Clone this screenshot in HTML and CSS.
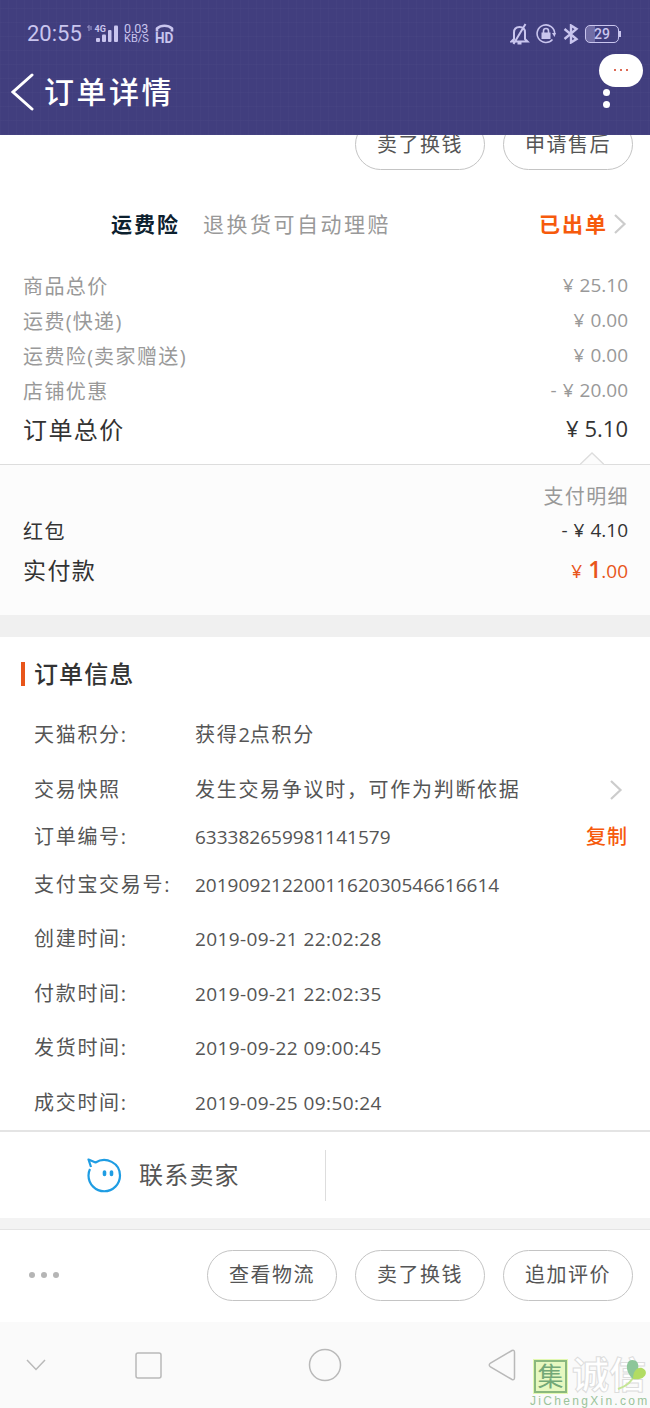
FILE: index.html
```html
<!DOCTYPE html>
<html lang="zh-CN">
<head>
    <meta charset="UTF-8">
    <meta name="viewport" content="width=device-width, initial-scale=1.0">
    <title>订单详情</title>
    <link rel="stylesheet" href="styles.css">
</head>
<body>
    <header class="header">
        <div class="status-bar">
            <span class="clock">20:55</span>
            <svg class="signal" width="33" height="20" viewBox="0 0 33 20" fill="#c9c5ee">
                <path d="M3 1v6M1 3h2M5 2v4" stroke="#c9c5ee" stroke-width="1" opacity=".7"/>
                <text x="8.500" y="7.500" font-size="9" font-weight="700">4G</text>
                <rect x="10" y="14" width="4" height="4" rx="1"/>
                <rect x="16" y="10.500" width="4" height="7.500" rx="1"/>
                <rect x="22" y="6" width="3.500" height="12" rx="1"/>
                <rect x="28" y="1.500" width="4" height="16.500" rx="1"/>
            </svg>
            <span class="speed"><span>0.03</span><span class="unit">KB/S</span></span>
            <span class="hd">
                <svg width="19" height="8" viewBox="0 0 19 8" fill="none" stroke="#c9c5ee" stroke-width="2.600"><path d="M2 7.500V4.500C6 .8 13 .8 17 4.500v3"/></svg>
                <b>HD</b>
            </span>
            <div class="status-icons">
                <svg width="20" height="22" viewBox="0 0 20 22" fill="none" stroke="#c9c5ee" stroke-width="2">
                    <path d="M4 16V9.500C4 6 6 4 9.500 4S15 6 15 9.500V16l2.500 2.500h-16zM7.500 20.500h4M3.500 21 15.500 1"/>
                </svg>
                <svg width="20" height="20" viewBox="0 0 20 20" fill="none" stroke="#c9c5ee" stroke-width="1.600">
                    <path d="M16.500 15.500A8.800 8.800 0 1 1 18.700 9.500"/>
                    <path d="M7.500 9V7a2.500 2.500 0 0 1 5 0v2"/>
                    <path d="M5.500 8.500h9V15h-9zM16 9h4l-1.500 4z" fill="#c9c5ee" stroke="none"/>
                </svg>
                <svg width="16" height="20" viewBox="0 0 16 20" fill="none" stroke="#c9c5ee" stroke-width="2.400">
                    <path d="m1.500 5 12 10L8 18.500v-17L13.500 5l-12 10"/>
                </svg>
                <span class="battery">29</span>
            </div>
        </div>
        <div class="title-bar">
            <svg width="24" height="40" viewBox="0 0 24 40" fill="none" stroke="#fff" stroke-width="3" stroke-linecap="round"><path d="M21 3 2 20l19 17"/></svg>
            <h1>订单详情</h1>
            <div class="more"><i></i><i></i></div>
        </div>
        <div class="bubble"><i></i><i></i><i></i></div>
    </header>

    <div class="goods-actions">
        <button class="button">卖了换钱</button>
        <button class="button">申请售后</button>
    </div>

    <div class="insurance">
        <b>运费险</b>
        <span class="desc">退换货可自动理赔</span>
        <b class="state">已出单</b>
        <svg class="arrow" width="14" height="22" viewBox="0 0 14 22"><path d="m2 2 9.500 9L2 20"/></svg>
    </div>

    <div class="prices">
        <div class="row"><span>商品总价</span><span class="num"><em>¥</em>25.10</span></div>
        <div class="row"><span>运费<s>(</s>快递<s>)</s></span><span class="num"><em>¥</em>0.00</span></div>
        <div class="row"><span>运费险<s>(</s>卖家赠送<s>)</s></span><span class="num"><em>¥</em>0.00</span></div>
        <div class="row"><span>店铺优惠</span><span class="num"><em>-</em><em>¥</em>20.00</span></div>
        <div class="row total"><span>订单总价</span><span class="num"><em>¥</em>5.10</span></div>
    </div>

    <div class="payment">
        <svg class="notch" width="24" height="13" viewBox="0 0 24 13"><path d="M0 12.500 12 1l12 11.500" fill="#fcfcfc" stroke="#ddd" stroke-width="1.300"/></svg>
        <div class="row detail"><span>支付明细</span></div>
        <div class="row"><span>红包</span><span class="num"><em>-</em><em>¥</em>4.10</span></div>
        <div class="row paid"><span>实付款</span><span class="num"><em>¥</em><strong>1</strong>.00</span></div>
    </div>

    <section class="info">
        <h2>订单信息</h2>
        <div class="item"><label>天猫积分<s>:</s></label><span>获得<u>2</u>点积分</span></div>
        <div class="item">
            <label>交易快照</label><span>发生交易争议时，可作为判断依据</span>
            <svg class="arrow" width="14" height="22" viewBox="0 0 14 22"><path d="m2 2 9.500 9L2 20"/></svg>
        </div>
        <div class="item tight"><label>订单编号<s>:</s></label><span class="code">633382659981141579</span><a class="copy">复制</a></div>
        <div class="item tight"><label>支付宝交易号<s>:</s></label><span class="code">2019092122001162030546616614</span></div>
        <div class="item"><label>创建时间<s>:</s></label><span class="time">2019-09-21 22:02:28</span></div>
        <div class="item"><label>付款时间<s>:</s></label><span class="time">2019-09-21 22:02:35</span></div>
        <div class="item"><label>发货时间<s>:</s></label><span class="time">2019-09-22 09:00:45</span></div>
        <div class="item"><label>成交时间<s>:</s></label><span class="time">2019-09-25 09:50:24</span></div>
    </section>

    <div class="contact">
        <div class="seller">
            <svg width="36" height="36" viewBox="0 0 36 36" fill="none" stroke="#1f9de3" stroke-width="2.200" stroke-linejoin="round">
                <path d="M5 10 2.500 2.500 9.500 5.500C20-1 34 6 34 18.500A15.700 15.700 0 0 1 2.500 18.500c0-3 .5-4.500 1.500-6.500"/>
                <path d="M18.500 15v2.500M25.500 15v2.500" stroke-width="3.600" stroke-linecap="round"/>
            </svg>
            <span>联系卖家</span>
        </div>
    </div>

    <div class="footer">
        <div class="dots"><i></i><i></i><i></i></div>
        <button class="button">查看物流</button>
        <button class="button">卖了换钱</button>
        <button class="button">追加评价</button>
    </div>

    <!-- Android 导航栏 -->
    <nav class="nav">
        <svg width="20" height="12" viewBox="0 0 20 12"><path d="m1 1 9 9.500L19 1"/></svg>
        <svg width="27" height="27" viewBox="0 0 27 27"><rect x="1" y="1" width="25" height="25" rx="2"/></svg>
        <svg width="34" height="34" viewBox="0 0 34 34"><circle cx="17" cy="17" r="15.500"/></svg>
        <svg width="28" height="32" viewBox="0 0 28 32"><path d="M24 1.500 2.500 14q-2.500 2 0 4L24 30.500q2.500 1 2.500-2v-25q0-3-2.500-2z"/></svg>
        <div class="watermark">
            <div class="brand">
                <span class="seal">集</span>
                <span class="outline">诚信</span>
                <svg class="leaf" width="34" height="34" viewBox="0 0 34 34">
                    <path d="M3 31C12 28 17 24 19 17" fill="none" stroke="#c5e695" stroke-width="2"/>
                    <path d="M18 21C9 13 11 2 17 2c6 0 7 5 6 9z" fill="#8dc69a"/>
                    <path d="M18 21c0-8 4-12 9-11 8 3 3 13-9 11z" fill="#b2dc62"/>
                </svg>
            </div>
            <div class="domain">JiChengXin.com</div>
        </div>
    </nav>
</body>
</html>
```

FILE: styles.css
```css
* {
    box-sizing: border-box;
}
body {
    margin: 0;
    width: 650px;
    height: 1408px;
    overflow: hidden;
    background: #fff;
    color: #555;
    font-family: "Open Sans", "Noto Sans CJK SC", sans-serif;
    font-size: 20px;
    line-height: 30px;
}
h1, h2 {
    margin: 0;
}
i, em, s, u {
    font-style: normal;
    text-decoration: none;
}
svg {
    display: block;
    flex: none;
}

/* 顶部 */
.header {
    position: relative;
    height: 135px;
    color: #c9c5ee;
    background-color: #413e7e;
    background-image:
        repeating-linear-gradient(90deg, rgba(255, 255, 255, .015) 0 1px, transparent 1px 8px),
        repeating-linear-gradient(0deg, rgba(255, 255, 255, .02) 0 1px, transparent 1px 14px);
}
.status-bar {
    display: flex;
    align-items: center;
    height: 68px;
    padding: 0 31px 0 27px;
    font-family: Roboto, sans-serif;
}
.clock {
    width: 59px;
    font-size: 22px;
}
.signal {
    margin-bottom: 1px;
}
.speed {
    display: flex;
    flex-direction: column;
    width: 26px;
    margin-left: 5px;
    font-size: 12.5px;
    line-height: 10px;
}
.unit {
    font-size: 11px;
}
.hd {
    margin-left: 5px;
    font-size: 15px;
    line-height: 13px;
}
.hd b {
    display: block;
    transform: scaleX(.9);
    transform-origin: left;
}
.status-icons {
    display: flex;
    align-items: center;
    gap: 6.500px;
    margin-left: auto;
}
.battery {
    position: relative;
    width: 34px;
    height: 18px;
    border: 1.500px solid #c9c5ee;
    border-radius: 5px;
    background: linear-gradient(90deg, #716da5 29%, transparent 29%);
    font-size: 14px;
    font-weight: 500;
    line-height: 16px;
    text-align: center;
}
.battery::after {
    content: "";
    position: absolute;
    right: -3px;
    top: 5px;
    width: 2px;
    height: 6px;
    background: #c9c5ee;
}
.title-bar {
    display: flex;
    align-items: center;
    height: 48px;
    padding: 0 40px 0 11px;
    color: #fff;
}
.title-bar h1 {
    margin-left: 9px;
    font-size: 30px;
    font-weight: 500;
    letter-spacing: 2.500px;
}
.more {
    display: flex;
    flex-direction: column;
    gap: 5px;
    margin: 12px 0 0 auto;
}
.more i {
    width: 7px;
    height: 7px;
    border-radius: 50%;
    background: #fff;
}
.bubble {
    position: absolute;
    top: 54px;
    right: 7px;
    display: flex;
    justify-content: center;
    align-items: center;
    gap: 4px;
    width: 44px;
    height: 33px;
    border-radius: 17px;
    background: #fff;
}
.bubble i {
    width: 2px;
    height: 2px;
    margin-bottom: 2px;
    background: #dd6a55;
}

/* 按钮 */
.button {
    flex: none;
    width: 130px;
    height: 51px;
    padding: 0;
    border: 1px solid #c4c4c4;
    border-radius: 26px;
    background: #fff;
    color: #555;
    font: inherit;
    font-size: 20px;
    letter-spacing: 1.500px;
}
.goods-actions {
    display: flex;
    justify-content: flex-end;
    align-items: flex-end;
    gap: 18px;
    height: 35px;
    padding-right: 17px;
    overflow: hidden;
}

/* 运费险 */
.insurance {
    display: flex;
    align-items: center;
    height: 99px;
    padding: 9px 23px 0 111px;
    font-size: 21px;
    letter-spacing: 2px;
}
.insurance b {
    color: #0c202e;
}
.insurance .desc {
    margin-left: 23px;
    color: #999;
    letter-spacing: 2.500px;
}
.insurance .state {
    margin-left: auto;
    color: #f65a0c;
}
.insurance .arrow {
    margin-left: 5px;
}
.arrow path {
    fill: none;
    stroke: #ccc;
    stroke-width: 2.200;
}

/* 价格 */
.row {
    display: flex;
    justify-content: space-between;
    align-items: center;
    height: 35px;
    padding: 0 22px 0 23px;
    letter-spacing: 1.400px;
}
.row s {
    letter-spacing: 1px;
}
.num {
    margin-bottom: 3px;
    font-size: 19px;
    letter-spacing: 0;
}
.num em {
    margin-right: 6px;
}
.prices {
    height: 195px;
    color: #999;
}
.total {
    height: 42px;
    color: #333;
    font-size: 24px;
}
.total .num {
    margin-bottom: 5px;
    font-size: 22px;
}
.payment {
    position: relative;
    height: 151px;
    padding-top: 14px;
    border-top: 1px solid #ddd;
    background: #fcfcfc;
    color: #333;
}
.notch {
    position: absolute;
    top: -13px;
    right: 46px;
}
.payment .detail {
    justify-content: flex-end;
    padding-right: 21px;
    color: #999;
}
.payment .paid {
    height: 42px;
    font-size: 23px;
}
.paid .num {
    margin-bottom: 1px;
    color: #e8551a;
    font-size: 19px;
}
.paid strong {
    font-size: 23px;
    font-weight: 600;
}

/* 订单信息 */
.info {
    height: 517px;
    border-top: 22px solid #f0f0f0;
    padding-left: 21px;
}
.info h2 {
    display: flex;
    align-items: center;
    height: 74px;
    margin-bottom: 9px;
    color: #333;
    font-size: 24px;
    font-weight: 500;
    letter-spacing: 1.100px;
}
.info h2::before {
    content: "";
    width: 4px;
    height: 24px;
    margin-right: 9px;
    background: #e8551a;
}
.item {
    display: flex;
    align-items: center;
    height: 30px;
    margin-bottom: 24.600px;
    padding: 0 22px 0 13px;
    letter-spacing: 1.700px;
}
.item:has(+ .tight) {
    margin-bottom: 17.500px;
}
.item label {
    width: 161px;
}
.item u {
    letter-spacing: 0;
}
.item .arrow {
    margin: 0 5px 0 auto;
}
.code, .time {
    font-size: 19px;
    letter-spacing: 0;
}
.time {
    letter-spacing: .4px;
}
.copy {
    margin-left: auto;
    color: #f65a0c;
    font-weight: 500;
    letter-spacing: 1px;
}

/* 联系卖家 */
.contact {
    display: flex;
    align-items: center;
    height: 99px;
    margin-top: -2px;
    border-top: 2px solid #e4e4e4;
    border-bottom: 11px solid #f3f3f3;
}
.seller {
    display: flex;
    align-items: center;
    gap: 17px;
    width: 326px;
    height: 51px;
    padding-left: 86px;
    border-right: 1px solid #ddd;
    font-size: 24px;
    letter-spacing: 1.200px;
}

/* 底部操作 */
.footer {
    display: flex;
    align-items: center;
    justify-content: flex-end;
    gap: 18px;
    height: 93px;
    padding: 0 17px 2px 29px;
    border-top: 1px solid #e4e4e4;
}
.dots {
    display: flex;
    gap: 6px;
    margin-right: auto;
}
.dots i {
    width: 6px;
    height: 6px;
    border-radius: 50%;
    background: #b5b5b5;
}
.nav {
    position: relative;
    display: flex;
    align-items: center;
    height: 86px;
    padding-left: 26px;
    background: #fafafa;
}
.nav > svg {
    fill: none;
    stroke: #b9b9b9;
    stroke-width: 1.500;
}
.nav > svg:nth-of-type(2) {
    margin-left: 89px;
}
.nav > svg:nth-of-type(3) {
    margin-left: 146px;
}
.nav > svg:nth-of-type(4) {
    margin-left: 146px;
}

/* 水印 */
.watermark {
    position: absolute;
    right: 0;
    bottom: 0;
    width: 120px;
    height: 50px;
}
.brand {
    display: flex;
    gap: 5px;
    height: 37px;
    padding-left: 4px;
}
.seal {
    width: 33px;
    height: 33px;
    margin-top: 2px;
    border: 2px solid #8ab87e;
    outline: 1px solid #e2f8b0;
    background: #e6f8c0;
    color: #73a877;
    font-size: 26px;
    line-height: 28px;
    text-align: center;
}
.outline {
    color: #fff;
    font-size: 37px;
    font-weight: 700;
    line-height: 34px;
    -webkit-text-stroke: 1px #ddd;
    white-space: nowrap;
}
.leaf {
    position: absolute;
    right: 1px;
    top: 0;
}
.domain {
    font-family: "Liberation Sans", sans-serif;
    color: #9bc49b;
    font-size: 12px;
    line-height: 13px;
    letter-spacing: 2.300px;
    white-space: nowrap;
}
```
